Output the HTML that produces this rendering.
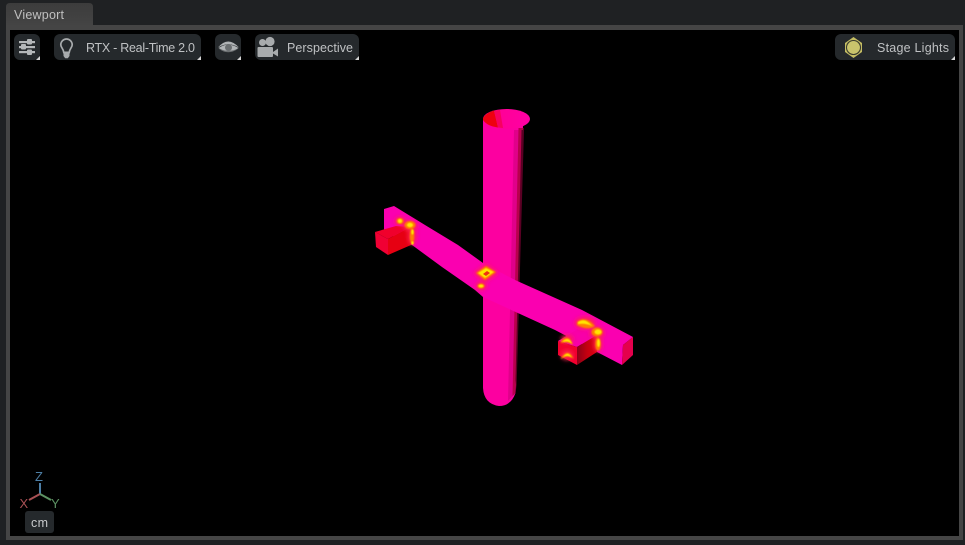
<!DOCTYPE html>
<html>
<head>
<meta charset="utf-8">
<style>
html,body{margin:0;padding:0;background:#1f2123;width:965px;height:545px;overflow:hidden}
svg{display:block}
text{font-family:"Liberation Sans",sans-serif}
</style>
</head>
<body>
<svg width="965" height="545" viewBox="0 0 965 545" xmlns="http://www.w3.org/2000/svg">
<defs>
<linearGradient id="top" x1="0" y1="0" x2="1" y2="0">
<stop offset="0" stop-color="#ff0098"/><stop offset=".4" stop-color="#ff0098"/><stop offset="1" stop-color="#ff00a4"/>
</linearGradient>
<linearGradient id="blk" x1="0" y1="0" x2="1" y2="0">
<stop offset="0" stop-color="#8c0018"/><stop offset=".5" stop-color="#c40010"/><stop offset="1" stop-color="#e00010"/>
</linearGradient>
<linearGradient id="tab" x1="0" y1="0" x2="0" y2="1">
<stop offset="0" stop-color="#3c3c3c"/><stop offset="1" stop-color="#444"/>
</linearGradient>
<filter id="b3" x="-80%" y="-80%" width="260%" height="260%"><feGaussianBlur stdDeviation="2"/></filter>
<filter id="b1" x="-50%" y="-50%" width="200%" height="200%"><feGaussianBlur stdDeviation=".9"/></filter>
<filter id="b2" x="-50%" y="-50%" width="200%" height="200%"><feGaussianBlur stdDeviation=".4"/></filter>
</defs>

<rect width="965" height="545" fill="#1f2123"/>
<rect x="6" y="25" width="957" height="515" fill="#454545"/>
<rect x="10" y="30" width="949" height="506" fill="#000"/>
<path d="M6 25V7q0-4 4-4H89q4 0 4 4V25Z" fill="url(#tab)"/>
<text x="14" y="19" font-size="12.500" fill="#c0c0c0" textLength="50">Viewport</text>

<!-- toolbar -->
<g fill="#25292c">
<rect x="14" y="34" width="26" height="26" rx="6"/>
<rect x="54" y="34" width="147" height="26" rx="6"/>
<rect x="215" y="34" width="26" height="26" rx="6"/>
<rect x="255" y="34" width="104" height="26" rx="6"/>
<rect x="835" y="34" width="120" height="26" rx="6"/>
</g>
<g fill="#d4d4d4">
<path d="M40 56v4h-4Z"/><path d="M201 56v4h-4Z"/><path d="M241 56v4h-4Z"/><path d="M359 56v4h-4Z"/><path d="M955 56v4h-4Z"/>
</g>
<!-- sliders -->
<g fill="#b4b7b9">
<rect x="19" y="41" width="16" height="2.200"/><rect x="19" y="46" width="16" height="2.200"/><rect x="19" y="51" width="16" height="2.200"/>
<rect x="27" y="39" width="5" height="5.500" rx="1"/><rect x="21" y="44" width="5" height="5.500" rx="1"/><rect x="27" y="49.500" width="5" height="5.500" rx="1"/>
</g>
<!-- bulb -->
<path d="M66.500 39a5.700 5.700 0 0 0-5.700 5.700c0 3 2.700 4 3 7.800h5.400c.3-3.800 3-4.800 3-7.800a5.700 5.700 0 0 0-5.700-5.700Z" fill="none" stroke="#a8abad" stroke-width="1.700"/>
<path d="M63.500 51.500h6v4.500l-1.700 2.300h-2.600l-1.700-2.300Z" fill="#a8abad"/>
<text x="86" y="52" font-size="12.500" fill="#bfc1c3" textLength="109">RTX - Real-Time 2.0</text>
<!-- eye -->
<path d="M218 47.500Q228 35.500 239 47.500Q228 41 218 47.500Z" fill="#b0b3b5"/>
<path d="M218.500 48Q223 45 228 44.500Q234 45 238.500 48Q229 54.500 218.500 48Z" fill="#b0b3b5"/>
<circle cx="228.500" cy="47.500" r="3.500" fill="#6a6e70"/>
<path d="M218.500 48.500Q228 56 238.500 48.500Q228 53 218.500 48.500Z" fill="#6c7072"/>
<!-- camera -->
<g fill="#a8abad">
<circle cx="262.500" cy="42.500" r="3.500"/><circle cx="270" cy="41.500" r="4.600"/>
<rect x="257.500" y="47" width="15.500" height="10" rx="1"/>
<path d="M273 52l5-3.500v8l-5-3Z"/>
</g>
<text x="287" y="52" font-size="12.500" fill="#bfc1c3" textLength="66">Perspective</text>
<!-- stage light -->
<path d="M853.500 37l8.500 6v9l-8.500 6-8.500-6v-9Z" fill="#c4bd63"/>
<circle cx="853.500" cy="47.500" r="7" fill="#c9c46c" stroke="#3a3b2e" stroke-width="1.100"/>
<text x="877" y="52" font-size="12.500" fill="#bfc1c3" textLength="72">Stage Lights</text>

<!-- cylinder -->
<path d="M483 118V388Q484 404 499 406Q511 406 515.500 393L523 126L530 119L483 118Z" fill="#fc00a0"/>
<path d="M514 130H523L515.500 393L508 401Z" fill="#e0008a"/>
<path d="M518.500 128H523.500L515.500 393L512.500 396Z" fill="#b8004c"/>
<path d="M521.500 130H524L516.500 390L515.500 380Z" fill="#5a0024"/>
<ellipse cx="506.500" cy="119" rx="23.500" ry="10" fill="url(#top)"/>
<path d="M483 118Q486 113 494 110.500L498 127.500Q487 126 483 120Z" fill="#ee0010"/>
<path d="M494 110.500L500 110L503 128L498 127.500Z" fill="#f80060"/>

<!-- beam -->
<path d="M394 206L384 209V232L412 245L442 267L475 290L483 297L555 330L597 352L622 365L623 345L633 337L582 310L515 280L483 263L458 245L425 225Z" fill="#fa00b0"/>
<path d="M623 345L633 337V355L622 365Z" fill="#e4004c"/>

<!-- left block -->
<path d="M375 232L396 226L410 227L388 239Z" fill="#f0002c"/>
<path d="M375 232L388 239V255L376 247Z" fill="#f00034"/>
<path d="M388 239L410 227L411 245L388 255Z" fill="#e60012"/>

<!-- right block -->
<path d="M558 341L578 329L597 335L577 347Z" fill="#f800a8"/>
<path d="M558 341L577 347V365L558 355Z" fill="#f2002e"/>
<path d="M577 347L597 335V352L577 365Z" fill="url(#blk)"/>

<!-- hot spot halos -->
<g filter="url(#b3)" fill="#ff2050">
<ellipse cx="400" cy="221" rx="5" ry="4"/>
<ellipse cx="410" cy="226" rx="7" ry="5"/>
<ellipse cx="412" cy="236" rx="4" ry="9"/>
<path d="M474 273L486 264L498 273L485 282Z"/>
<ellipse cx="481" cy="286" rx="5" ry="4"/>
<ellipse cx="585" cy="323" rx="10" ry="6"/>
<ellipse cx="597" cy="333" rx="7" ry="6"/>
<ellipse cx="598" cy="344" rx="4" ry="8"/>
<ellipse cx="567" cy="339" rx="6" ry="4"/>
<ellipse cx="567" cy="355" rx="6" ry="5"/>
</g>
<g filter="url(#b1)" fill="#ff8000">
<ellipse cx="400" cy="221" rx="3.500" ry="3"/>
<ellipse cx="410" cy="225" rx="5.500" ry="4"/>
<ellipse cx="412" cy="236" rx="2.200" ry="7.500"/>
<path d="M476 273L486 266L496 272L485 280Z"/>
<ellipse cx="481" cy="286" rx="3.500" ry="2.500"/>
<path d="M577 322Q585 315 595 326Q588 331 577 325Z"/>
<ellipse cx="597" cy="332" rx="5.500" ry="4.500"/>
<ellipse cx="598" cy="344" rx="2.800" ry="6.500"/>
<path d="M561 341Q569 333 573 345Q568 341 561 343Z"/>
<path d="M561 358Q568 347 574 359Q568 354 561 359Z"/>
</g>
<g filter="url(#b2)" fill="#ffe600">
<ellipse cx="400" cy="221" rx="2" ry="2"/>
<ellipse cx="410" cy="225" rx="3" ry="2.200"/>
<ellipse cx="412.500" cy="232" rx="1.200" ry="2.500"/>
<ellipse cx="412.500" cy="243" rx="1.200" ry="1.800"/>
<path d="M478 273L486 268L494 272L485 278Z"/>
<ellipse cx="481" cy="286" rx="2.500" ry="1.500"/>
<path d="M578 322Q585 317 592 326Q586 323 578 324Z"/>
<ellipse cx="598" cy="332" rx="3.500" ry="2.500"/>
<ellipse cx="598.500" cy="343" rx="1.500" ry="4"/>
<path d="M563 341Q569 336 572 344Q568 340 563 342Z"/>
<path d="M563 357Q568 350 572 358Q568 354 563 357Z"/>
</g>
<path d="M483 274L487 271L490 273L486 276Z" fill="#f03010"/>

<!-- axis -->
<path d="M40 483V494" stroke="#4d7fa6" stroke-width="2" fill="none"/>
<path d="M40 494L29 500" stroke="#a85054" stroke-width="2" fill="none"/>
<path d="M40 494L51 500" stroke="#5d9263" stroke-width="2" fill="none"/>
<text x="35" y="481" font-size="13" fill="#4d7fa6">Z</text>
<text x="19.500" y="508" font-size="13" fill="#a85054">X</text>
<text x="51" y="508" font-size="13" fill="#5d9263">Y</text>
<rect x="25" y="511" width="29" height="22" rx="3" fill="#25292c"/>
<text x="31" y="527" font-size="12.500" fill="#c8cacc" textLength="17">cm</text>
</svg>
</body>
</html>
